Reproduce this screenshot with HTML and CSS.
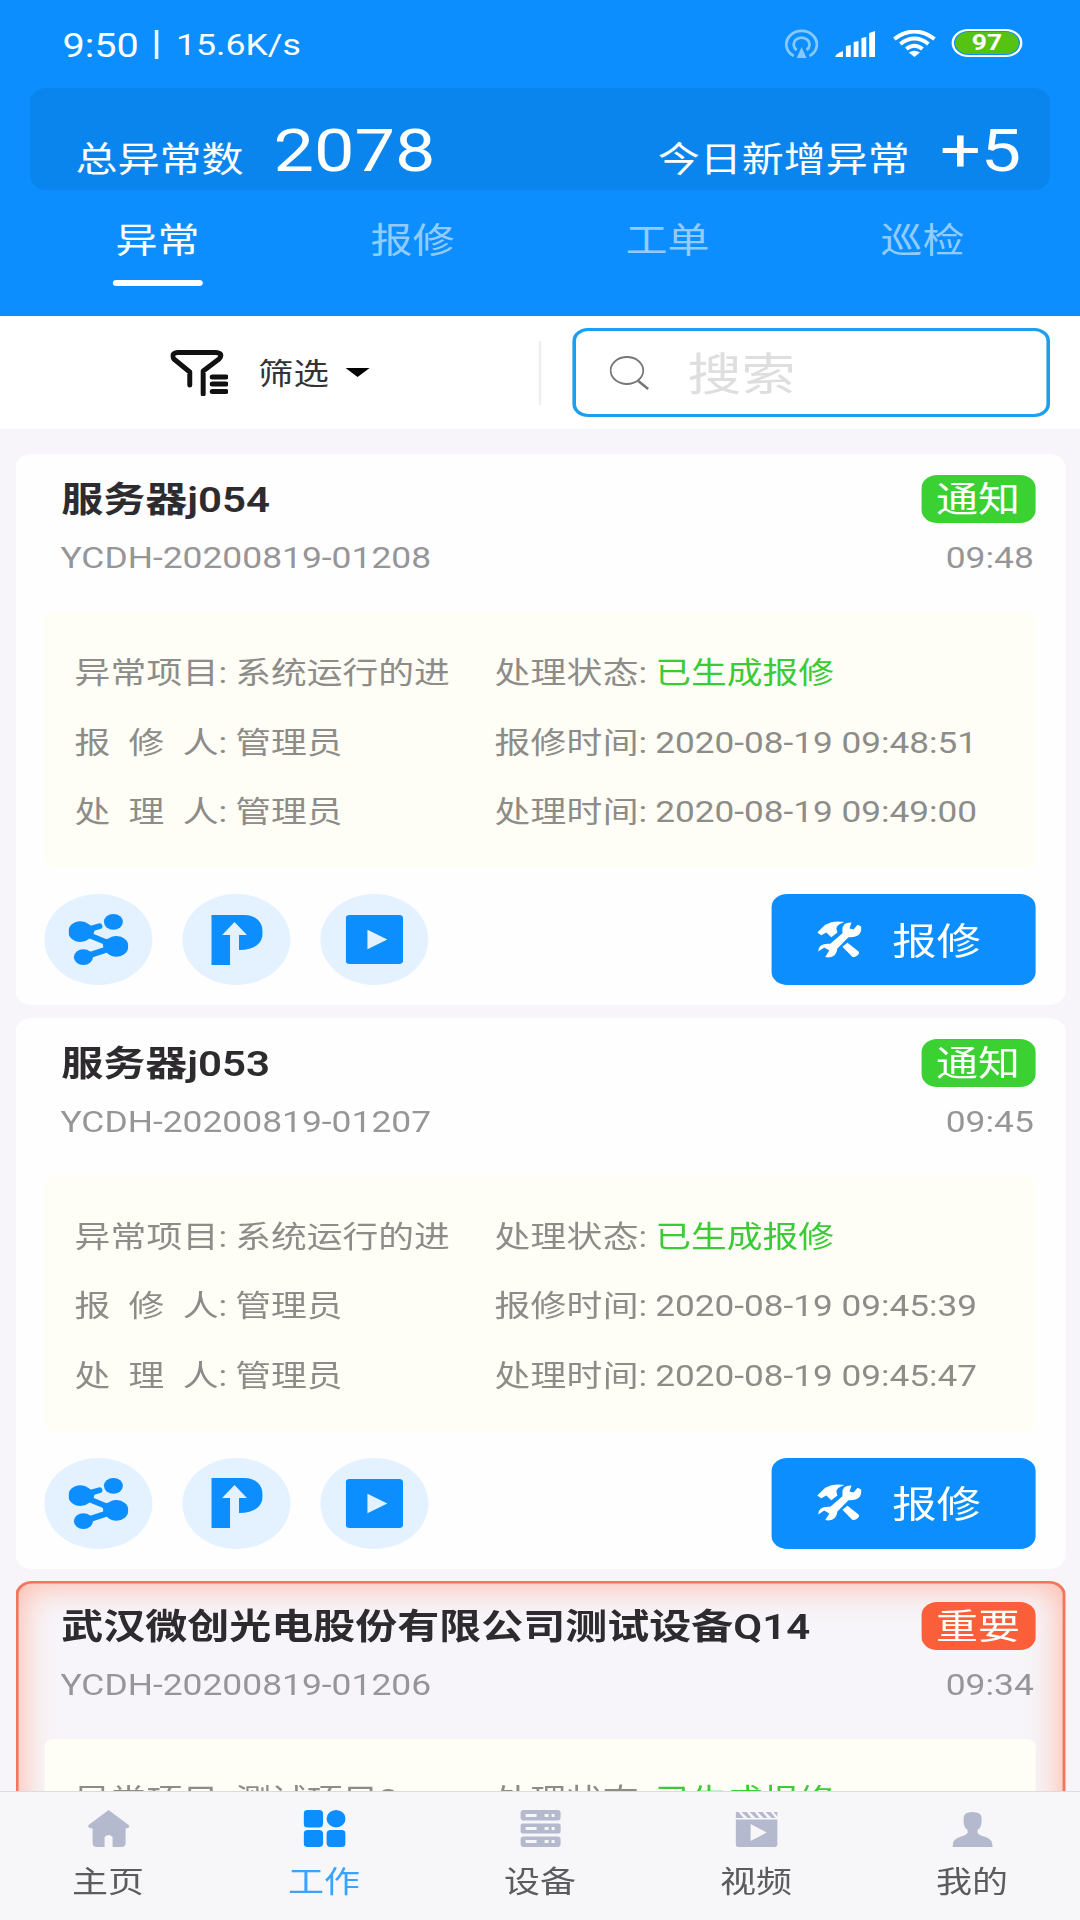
FILE: index.html
```html
<!DOCTYPE html>
<html lang="zh-CN">
<head>
<meta charset="utf-8">
<title>异常</title>
<link rel="stylesheet" href="styles.css">
</head>
<body>
<svg class="defs" aria-hidden="true">
  <symbol id="share" viewBox="0 0 60 52" preserveAspectRatio="none">
    <path d="M12 18 31 12.500M12 18 48 33M48 33 15 44" fill="none" stroke="currentColor" stroke-width="6" stroke-linecap="round"/>
    <path d="M20 11 27 14 25 21 18 26ZM40 25 34 27 35 35 40 40Z" fill="currentColor"/>
    <ellipse cx="12" cy="18" rx="12" ry="10.500" fill="currentColor"/>
    <ellipse cx="45" cy="8" rx="9.500" ry="8" fill="currentColor"/>
    <ellipse cx="48" cy="33" rx="12" ry="10.500" fill="currentColor"/>
    <ellipse cx="15" cy="44" rx="9.500" ry="8" fill="currentColor"/>
  </symbol>
  <symbol id="park" viewBox="0 0 52 50" preserveAspectRatio="none">
    <path fill="currentColor" d="M0 0H33C45 0 52 7 52 17.500S44 35 28 35V20H36L23.500 7 11 20H19V50H0Z"/>
  </symbol>
  <symbol id="play" viewBox="0 0 58 50" preserveAspectRatio="none">
    <path fill="currentColor" fill-rule="evenodd" d="M4 0H54Q58 0 58 4V46Q58 50 54 50H4Q0 50 0 46V4Q0 0 4 0ZM22 15V35L42 25Z"/>
  </symbol>
  <symbol id="tools" viewBox="0 0 44 40" preserveAspectRatio="none">
    <path fill="currentColor" d="M0 12 8 4Q16-1 27 1 19 4 19 8L20 12 14 17 9 12 4 15ZM25 27 30 23 41 32Q43 35 37 38L35 38ZM40 4 36 9 32 8 34 1.500Q25 1 25 9L25 13 13 24Q1 23 1 32L7 28 12 31 8 38Q19 40 20 29L31 17Q44 18 44 6Z"/>
  </symbol>
</svg>

<div class="screen">
  <header class="top">
    <div class="status">
      <span class="clock">9:50</span><i class="bar"></i><span class="speed">15.6K/s</span>
      <svg class="hotspot" viewBox="0 0 34 30" preserveAspectRatio="none"><path d="M9 27A15.500 13.500 0 1 1 25 27M12 21A8 7 0 1 1 22 21" fill="none" stroke="currentColor" stroke-width="2.800"/><path d="M17 18 22 29H12Z" fill="currentColor"/></svg>
      <svg class="signal" viewBox="0 0 42 27" preserveAspectRatio="none"><path fill="#fff" d="M0 26Q0 23 8 20V26ZM11 15 16 14V26H11ZM19 11 24 10V26H19ZM27 7 32 6V26H27ZM35 2 41 0V26H35Z"/></svg>
      <svg class="wifi" viewBox="0 0 43 27" preserveAspectRatio="none"><path d="M1.500 9Q21.500-6 41.500 9M7.500 14Q21.500 3 35.500 14M13.500 19Q21.500 12.500 29.500 19" fill="none" stroke="#fff" stroke-width="3.900"/><path fill="#fff" d="M16 22.500Q21.500 19 27 22.500L21.500 27Z"/></svg>
      <span class="battery"><b>97</b></span>
    </div>
    <div class="stats">
      <span>总异常数</span><strong>2078</strong>
      <span class="today">今日新增异常</span><strong>+5</strong>
    </div>
    <nav class="tabs"><a class="on">异常</a><a>报修</a><a>工单</a><a>巡检</a></nav>
  </header>

  <section class="tools-row">
    <div class="filter">
      <svg class="funnel" viewBox="0 0 58 46" preserveAspectRatio="none"><path d="M19.500 35V22L3.500 9Q0 3 8 2.500H45Q54 3 49 9L33 21V44M42 27H56M42 34H56M42 41.500H56" fill="none" stroke="#111" stroke-width="5" stroke-linecap="round" stroke-linejoin="round"/></svg>
      <span>筛选</span><i class="caret"></i>
    </div>
    <div class="search">
      <svg viewBox="0 0 40 34" preserveAspectRatio="none"><ellipse cx="17.500" cy="14.500" rx="16.500" ry="13.500" fill="none" stroke="#777" stroke-width="1.800"/><path d="M29 25 39 33" stroke="#777" stroke-width="2.600"/></svg>
      <span>搜索</span>
    </div>
  </section>

  <main class="list">
    <article class="card">
      <div class="head"><h2>服务器j054</h2><span class="badge">通知</span></div>
      <div class="meta"><span>YCDH-20200819-01208</span><time>09:48</time></div>
      <dl class="info">
        <dt><span>异常项目</span>:</dt><dd>系统运行的进</dd>
        <dt><span>处理状态</span>:</dt><dd class="done">已生成报修</dd>
        <dt><span>报 修 人</span>:</dt><dd>管理员</dd>
        <dt><span>报修时间</span>:</dt><dd class="num">2020-08-19 09:48:51</dd>
        <dt><span>处 理 人</span>:</dt><dd>管理员</dd>
        <dt><span>处理时间</span>:</dt><dd class="num">2020-08-19 09:49:00</dd>
      </dl>
      <div class="actions">
        <a class="round"><svg class="i-share"><use href="#share"/></svg></a>
        <a class="round"><svg class="i-park"><use href="#park"/></svg></a>
        <a class="round"><svg class="i-play"><use href="#play"/></svg></a>
        <a class="repair"><svg><use href="#tools"/></svg>报修</a>
      </div>
    </article>

    <article class="card">
      <div class="head"><h2>服务器j053</h2><span class="badge">通知</span></div>
      <div class="meta"><span>YCDH-20200819-01207</span><time>09:45</time></div>
      <dl class="info">
        <dt><span>异常项目</span>:</dt><dd>系统运行的进</dd>
        <dt><span>处理状态</span>:</dt><dd class="done">已生成报修</dd>
        <dt><span>报 修 人</span>:</dt><dd>管理员</dd>
        <dt><span>报修时间</span>:</dt><dd class="num">2020-08-19 09:45:39</dd>
        <dt><span>处 理 人</span>:</dt><dd>管理员</dd>
        <dt><span>处理时间</span>:</dt><dd class="num">2020-08-19 09:45:47</dd>
      </dl>
      <div class="actions">
        <a class="round"><svg class="i-share"><use href="#share"/></svg></a>
        <a class="round"><svg class="i-park"><use href="#park"/></svg></a>
        <a class="round"><svg class="i-play"><use href="#play"/></svg></a>
        <a class="repair"><svg><use href="#tools"/></svg>报修</a>
      </div>
    </article>

    <article class="card urgent">
      <div class="head"><h2>武汉微创光电股份有限公司测试设备Q14</h2><span class="badge">重要</span></div>
      <div class="meta"><span>YCDH-20200819-01206</span><time>09:34</time></div>
      <dl class="info">
        <dt><span>异常项目</span>:</dt><dd>测试项目2</dd>
        <dt><span>处理状态</span>:</dt><dd class="done">已生成报修</dd>
      </dl>
    </article>
  </main>

  <nav class="bottom">
    <a><svg viewBox="0 0 42 37" preserveAspectRatio="none"><path fill="currentColor" d="M21 0 41 15Q43 18 38 18.500V33Q38 37 34 37H25V27Q21 23 17 27V37H9Q5 37 5 33V18.500Q-1 18 1 15Z"/></svg>主页</a>
    <a class="on"><svg viewBox="0 0 42 37" preserveAspectRatio="none"><g fill="currentColor"><rect width="19.500" height="17.500" rx="4"/><ellipse cx="32.500" cy="8.700" rx="9.500" ry="8.700"/><rect y="20" width="19.500" height="17" rx="4"/><rect x="23" y="20" width="19" height="17" rx="4"/></g></svg>工作</a>
    <a><svg viewBox="0 0 42 37" preserveAspectRatio="none"><g fill="currentColor"><rect x="1" width="40" height="10.500" rx="3"/><rect x="1" y="13.500" width="40" height="10" rx="2"/><rect x="1" y="26.500" width="40" height="10.500" rx="3"/></g><path stroke="#f7f6f9" stroke-width="3" d="M6 5.500H17M6 18.500H17M6 31.500H17M25 5.500H29M32 5.500H35M25 18.500H29M32 18.500H35M25 31.500H29M32 31.500H35"/></svg>设备</a>
    <a><svg viewBox="0 0 42 37" preserveAspectRatio="none"><path fill="currentColor" fill-rule="evenodd" d="M0 9.500H42V34Q42 37 39 37H3Q0 37 0 34ZM15 14V31L31 22.500ZM0 2H3L8 8H0ZM6 2H11L16 8H12ZM14 2H19L24 8H20ZM22 2H27L32 8H28ZM30 2H35L40 8H36ZM38 2H42V7Z"/></svg>视频</a>
    <a><svg viewBox="0 0 42 37" preserveAspectRatio="none"><path fill="currentColor" d="M12 8Q12 2 21 2T30 8V12Q30 17 26 20V23Q27 25 34 27Q41 29 41 37H1Q1 29 8 27Q15 25 16 23V20Q12 17 12 12Z"/></svg>我的</a>
  </nav>
</div>
</body>
</html>
```
FILE: styles.css
```css
/* The phone screen is laid out 900px wide and stretched to the 1080px window. */
* { box-sizing: border-box; }
body {
  margin: 0;
  width: 1080px;
  height: 1920px;
  overflow: hidden;
  background: #f7f5f9;
  font-family: Roboto, "Noto Sans CJK SC", sans-serif;
}
.defs { display: none; }
.screen {
  width: 900px;
  height: 1920px;
  display: flex;
  flex-direction: column;
  transform: scaleX(1.2);
  transform-origin: 0 0;
}
svg { display: block; flex: none; }
h2, dl, dd { margin: 0; }

.top {
  height: 316px;
  flex: none;
  padding: 0 25px;
  background: #0c8eff;
  color: #fff;
}
.status {
  height: 88px;
  padding: 0 23px 0 27px;
  display: flex;
  align-items: center;
}
.clock { font-size: 33px; line-height: 88px; padding-top: 3px; }
.bar { width: 3px; height: 29px; margin: 1px 15px 0 13px; background: #e4f3ff; }
.speed { font-size: 29.700px; line-height: 88px; padding-top: 1px; }
.hotspot { width: 28px; height: 30px; margin-left: auto; color: #86c9ff; }
.signal { width: 34px; height: 27px; margin-left: 14px; }
.wifi { width: 36px; height: 27px; margin-left: 14px; margin-top: -2px; }
.battery {
  width: 59px;
  height: 28px;
  margin-left: 13px;
  margin-top: -2px;
  padding: 1px;
  border: 2px solid #fff;
  border-radius: 14px;
}
.battery b {
  display: block;
  height: 22px;
  border-radius: 11px;
  background: #56c313;
  font-size: 22px;
  line-height: 22px;
  text-align: center;
}
.stats {
  height: 102px;
  padding: 23px 24px 0 38px;
  border-radius: 14px;
  display: flex;
  background: #0a85ee;
  font-size: 35px;
}
.stats span { line-height: 100px; height: 79px; }
.stats strong { font-size: 60px; line-height: 80px; font-weight: 400; margin-left: 25px; }
.stats .today { margin-left: auto; }
.tabs { display: grid; grid-template-columns: repeat(4, 1fr); }
.tabs a {
  height: 96px;
  font-size: 35px;
  line-height: 104px;
  text-align: center;
  color: #92cbff;
}
.tabs .on { color: #fff; }
.tabs .on::after {
  content: "";
  display: block;
  width: 75px;
  height: 6px;
  margin: -14px auto 0;
  border-radius: 3px;
  background: #fff;
}

.tools-row {
  height: 113px;
  flex: none;
  display: flex;
  align-items: center;
  padding-right: 25px;
  background: #fff;
}
.filter {
  width: 451px;
  height: 64px;
  padding-left: 142px;
  display: flex;
  align-items: center;
  border-right: 2px solid #efedf1;
  font-size: 29.500px;
  color: #333;
}
.filter span { margin-left: 25px; padding-bottom: 4px; }
.funnel { width: 48px; height: 46px; }
.caret {
  margin-left: 14px;
  border: 10px solid transparent;
  border-top: 9px solid #000;
  border-bottom: 0;
}
.search {
  width: 398px;
  height: 89px;
  margin-left: auto;
  padding-left: 28px;
  display: flex;
  align-items: center;
  border: 3px solid #1c9fee;
  border-radius: 13px;
  font-size: 45px;
  color: #dedede;
}
.search svg { width: 33px; height: 34px; }
.search span { margin-left: 32px; padding-top: 6px; line-height: 60px; }

.list {
  flex: 1;
  min-height: 0;
  overflow: hidden;
  padding: 25px 12.500px 0 13px;
  display: flex;
  flex-direction: column;
  gap: 12.500px;
}
.card {
  height: 551px;
  flex: none;
  padding: 21px 25px 0 24px;
  border-radius: 14px;
  background: #fefefe;
}
.head { height: 48px; padding-left: 14px; display: flex; justify-content: space-between; }
h2 { font-size: 35px; line-height: 52px; font-weight: 600; color: #2d2b2e; white-space: nowrap; }
.badge {
  width: 95px;
  height: 48px;
  border-radius: 13px;
  background: #3bd133;
  color: #fff;
  font-size: 35px;
  line-height: 51px;
  text-align: center;
}
.meta {
  height: 89px;
  padding: 0 1px 0 13.500px;
  display: flex;
  justify-content: space-between;
  font-size: 29.500px;
  line-height: 71px;
  color: #969598;
}
.info {
  height: 255px;
  padding: 26px 0 0 25px;
  display: grid;
  grid-template-columns: 134px 216px 134px 1fr;
  grid-auto-rows: 69.500px;
  border-radius: 8px;
  background: #fefef6;
  font-size: 29.800px;
  line-height: 70px;
  color: #8d8c88;
  white-space: nowrap;
}
.info dt { display: flex; }
.info dt span { width: 120px; text-align-last: justify; }
.info .done { color: #3ccb37; }
.info .num { font-size: 29.300px; }
.actions { padding-top: 27px; display: flex; gap: 25px; }
.round {
  width: 90px;
  height: 91px;
  border-radius: 50%;
  display: flex;
  align-items: center;
  justify-content: center;
  background: #e4f2ff;
  color: #0c8eff;
}
.i-share { width: 50px; height: 51px; }
.i-park { width: 43px; height: 50px; }
.i-play { width: 48px; height: 49px; }
.repair {
  width: 220px;
  height: 91px;
  margin-left: auto;
  padding: 0 0 2px 38px;
  display: flex;
  align-items: center;
  border-radius: 13px;
  background: #0c8eff;
  color: #fff;
  font-size: 37px;
}
.repair svg { width: 37px; height: 38px; margin: 2px 26px 0 0; }

.urgent {
  background: #f7f5f9;
  box-shadow: inset 0 0 0 2.500px #f0775d, inset 0 0 30px 5px #ffb9a8;
}
.urgent .badge { background: #fa5f39; }

.bottom {
  height: 129px;
  flex: none;
  display: grid;
  grid-template-columns: repeat(5, 1fr);
  border-top: 1px solid #dcdbdd;
  background: #f7f6f9;
}
.bottom a {
  display: flex;
  flex-direction: column;
  align-items: center;
  padding-top: 18px;
  font-size: 30px;
  line-height: 69px;
  color: #5c5b5e;
}
.bottom svg { width: 35px; height: 37px; color: #b4b9cd; }
.bottom .on { color: #3ba3ff; }
.bottom .on svg { color: #0c8eff; }
```
